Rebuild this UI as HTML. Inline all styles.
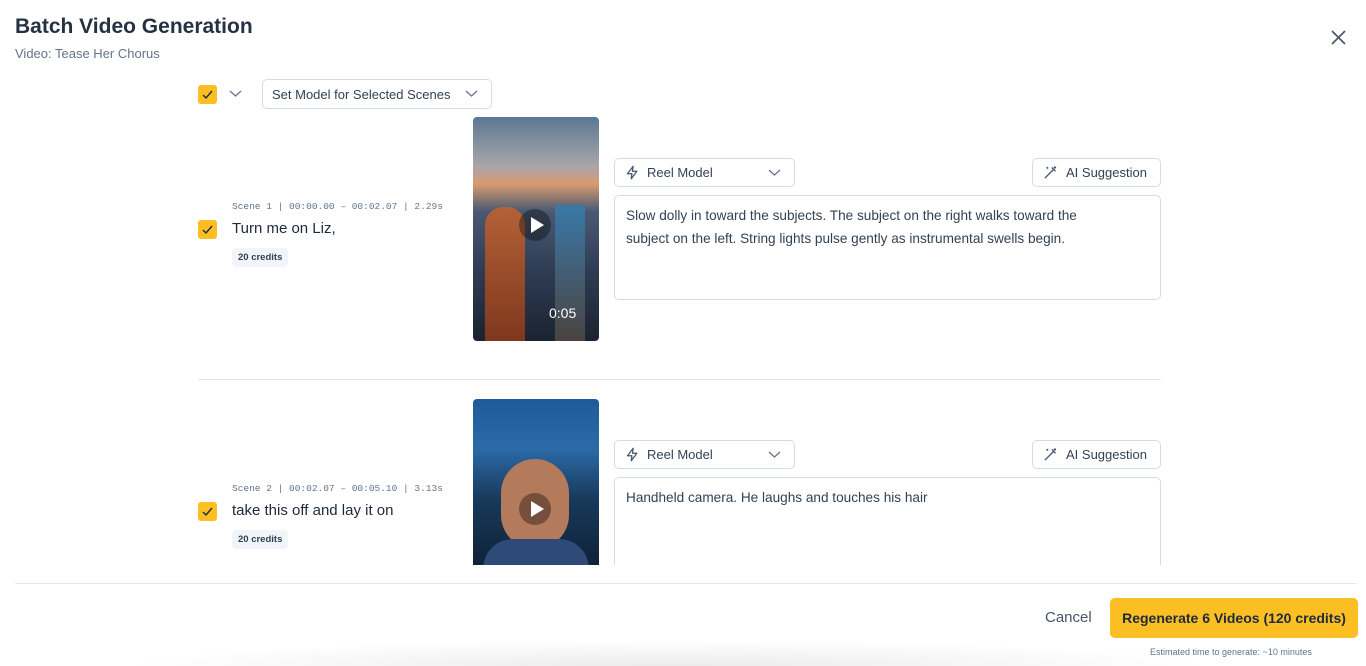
<!DOCTYPE html>
<html><head><style>
*{box-sizing:border-box;margin:0;padding:0}
body{width:1366px;height:666px;overflow:hidden;background:#fff;font-family:"Liberation Sans",sans-serif;color:#1e293b;position:relative}
.abs{position:absolute}
h1{position:absolute;left:15px;top:15px;font-size:21px;font-weight:bold;color:#263244}
.sub{left:15px;top:46px;font-size:13px;color:#64748b}
.cb{position:absolute;width:19px;height:19px;background:#fbbf24;border-radius:3px}
.cb svg{position:absolute;left:3px;top:3px}
.sel{border:1px solid #d6dbe3;border-radius:5px;background:#fff;font-size:13px;color:#334155}
.meta{font-family:"Liberation Mono",monospace;font-size:9.5px;color:#64748b}
.ttl{font-size:15px;color:#1e293b}
.cr{font-size:9.5px;font-weight:bold;background:#f1f5f9;border-radius:4px;padding:4px 6px;color:#334155}
.ta{border:1px solid #d6dbe3;border-radius:5px;padding:8px 11px;font-size:13.6px;line-height:23px;color:#334155}
.vid{border-radius:4px;overflow:hidden}
.play{position:absolute;left:46px;top:92px;width:32px;height:32px;border-radius:50%;background:rgba(0,0,0,.35)}
.play:after{content:"";position:absolute;left:12px;top:8px;border-left:13px solid #fff;border-top:8px solid transparent;border-bottom:8px solid transparent}
</style></head><body>
<h1>Batch Video Generation</h1>
<div class="abs sub">Video: Tease Her Chorus</div>
<svg class="abs" style="left:1331px;top:30px" width="15" height="15" viewBox="0 0 15 15"><path d="M1 1L14 14M14 1L1 14" stroke="#475569" stroke-width="1.6"/></svg>

<div class="cb" style="left:198px;top:85px"><svg width="13" height="13" viewBox="0 0 13 13"><path d="M2 7l3 3 6-7" stroke="#1e293b" stroke-width="1.4" fill="none"/></svg></div>
<svg class="abs" style="left:229px;top:89px" width="13" height="9"><path d="M1 2l5.5 5L12 2" stroke="#64748b" stroke-width="1.3" fill="none"/></svg>
<div class="abs sel" style="left:262px;top:79px;width:230px;height:30px;padding:7px 9px">Set Model for Selected Scenes</div>
<svg class="abs" style="left:465px;top:89px" width="13" height="9"><path d="M1 2l5.5 5L12 2" stroke="#64748b" stroke-width="1.3" fill="none"/></svg>

<!-- scene 1 -->
<div class="abs meta" style="left:232px;top:201px">Scene 1 | 00:00.00 – 00:02.07 | 2.29s</div>
<div class="cb" style="left:198px;top:220px"><svg width="13" height="13" viewBox="0 0 13 13"><path d="M2 7l3 3 6-7" stroke="#1e293b" stroke-width="1.4" fill="none"/></svg></div>
<div class="abs ttl" style="left:232px;top:220px">Turn me on Liz,</div>
<div class="abs cr" style="left:232px;top:248px">20 credits</div>
<div class="abs vid" style="left:473px;top:117px;width:126px;height:224px;background:linear-gradient(#5b7894 0%,#a9a6a8 22%,#d89a70 30%,#4a5a72 42%,#2d3b52 70%,#1b2330 100%)">
<div class="abs" style="left:12px;top:90px;width:40px;height:134px;background:linear-gradient(#c0622f,#8a3a1c);border-radius:18px 18px 0 0;opacity:.9"></div>
<div class="abs" style="left:82px;top:88px;width:30px;height:136px;background:linear-gradient(#3a78a8,#4a4440)"></div>
<div class="play"></div>
<div class="abs" style="left:76px;top:188px;color:#fff;font-size:14px">0:05</div></div>
<div class="abs sel" style="left:614px;top:158px;width:181px;height:29px"></div>
<svg class="abs" style="left:625px;top:165px" width="15" height="15" viewBox="0 0 24 24"><path d="M13 2L4 14h7l-1 8 9-12h-7z" stroke="#475569" stroke-width="2" fill="none" stroke-linejoin="round"/></svg>
<div class="abs" style="left:647px;top:165px;font-size:13px;color:#334155">Reel Model</div>
<svg class="abs" style="left:768px;top:168px" width="13" height="9"><path d="M1 2l5.5 5L12 2" stroke="#64748b" stroke-width="1.3" fill="none"/></svg>
<div class="abs sel" style="left:1032px;top:158px;width:129px;height:29px"></div>
<svg class="abs" style="left:1043px;top:165px" width="15" height="15" viewBox="0 0 24 24"><path d="M3 21L17 7M14 4l6 6M19 2v4M21 4h-4M7 3v3M8.5 4.5h-3" stroke="#475569" stroke-width="2" fill="none"/></svg>
<div class="abs" style="left:1066px;top:165px;font-size:13px;color:#334155">AI Suggestion</div>
<div class="abs ta" style="left:614px;top:195px;width:547px;height:105px;padding-right:50px">Slow dolly in toward the subjects. The subject on the right walks toward the subject on the left. String lights pulse gently as instrumental swells begin.</div>

<div class="abs" style="left:198px;top:379px;width:963px;height:1px;background:#e2e8f0"></div>

<!-- scene 2 -->
<div class="abs meta" style="left:232px;top:483px">Scene 2 | 00:02.07 – 00:05.10 | 3.13s</div>
<div class="cb" style="left:198px;top:502px"><svg width="13" height="13" viewBox="0 0 13 13"><path d="M2 7l3 3 6-7" stroke="#1e293b" stroke-width="1.4" fill="none"/></svg></div>
<div class="abs ttl" style="left:232px;top:502px">take this off and lay it on</div>
<div class="abs cr" style="left:232px;top:530px">20 credits</div>
<div class="abs vid" style="left:473px;top:399px;width:126px;height:166px;border-radius:4px 4px 0 0;background:linear-gradient(#1f5a9a 0%,#2b6aa8 30%,#183a5c 60%,#0f2238 100%)">
<div class="abs" style="left:28px;top:60px;width:68px;height:90px;border-radius:34px;background:#b47a5c"></div>
<div class="abs" style="left:10px;top:140px;width:106px;height:30px;border-radius:30px 30px 0 0;background:#2d4a78"></div>
<div class="play" style="top:94px"></div></div>
<div class="abs sel" style="left:614px;top:440px;width:181px;height:29px"></div>
<svg class="abs" style="left:625px;top:447px" width="15" height="15" viewBox="0 0 24 24"><path d="M13 2L4 14h7l-1 8 9-12h-7z" stroke="#475569" stroke-width="2" fill="none" stroke-linejoin="round"/></svg>
<div class="abs" style="left:647px;top:447px;font-size:13px;color:#334155">Reel Model</div>
<svg class="abs" style="left:768px;top:450px" width="13" height="9"><path d="M1 2l5.5 5L12 2" stroke="#64748b" stroke-width="1.3" fill="none"/></svg>
<div class="abs sel" style="left:1032px;top:440px;width:129px;height:29px"></div>
<svg class="abs" style="left:1043px;top:447px" width="15" height="15" viewBox="0 0 24 24"><path d="M3 21L17 7M14 4l6 6M19 2v4M21 4h-4M7 3v3M8.5 4.5h-3" stroke="#475569" stroke-width="2" fill="none"/></svg>
<div class="abs" style="left:1066px;top:447px;font-size:13px;color:#334155">AI Suggestion</div>
<div class="abs ta" style="left:614px;top:477px;width:547px;height:100px;border-bottom:none;border-radius:5px 5px 0 0">Handheld camera. He laughs and touches his hair</div>

<div class="abs" style="left:0;top:565px;width:1366px;height:101px;background:#fff"></div>
<div class="abs" style="left:15px;top:583px;width:1342px;height:1px;background:#e2e8f0"></div>
<div class="abs" style="left:120px;top:640px;width:1100px;height:26px;background:radial-gradient(ellipse at 50% 100%,rgba(0,0,0,.08),rgba(0,0,0,0) 70%)"></div>
<div class="abs" style="left:1045px;top:609px;font-size:15px;color:#475569">Cancel</div>
<div class="abs" style="left:1110px;top:598px;width:248px;height:40px;background:#fbbf24;border-radius:5px;font-size:14px;font-weight:bold;color:#1e293b;text-align:center;line-height:40px">Regenerate 6 Videos (120 credits)</div>
<div class="abs" style="left:1150px;top:647px;font-size:9px;color:#64748b">Estimated time to generate: ~10 minutes</div>
</body></html>
